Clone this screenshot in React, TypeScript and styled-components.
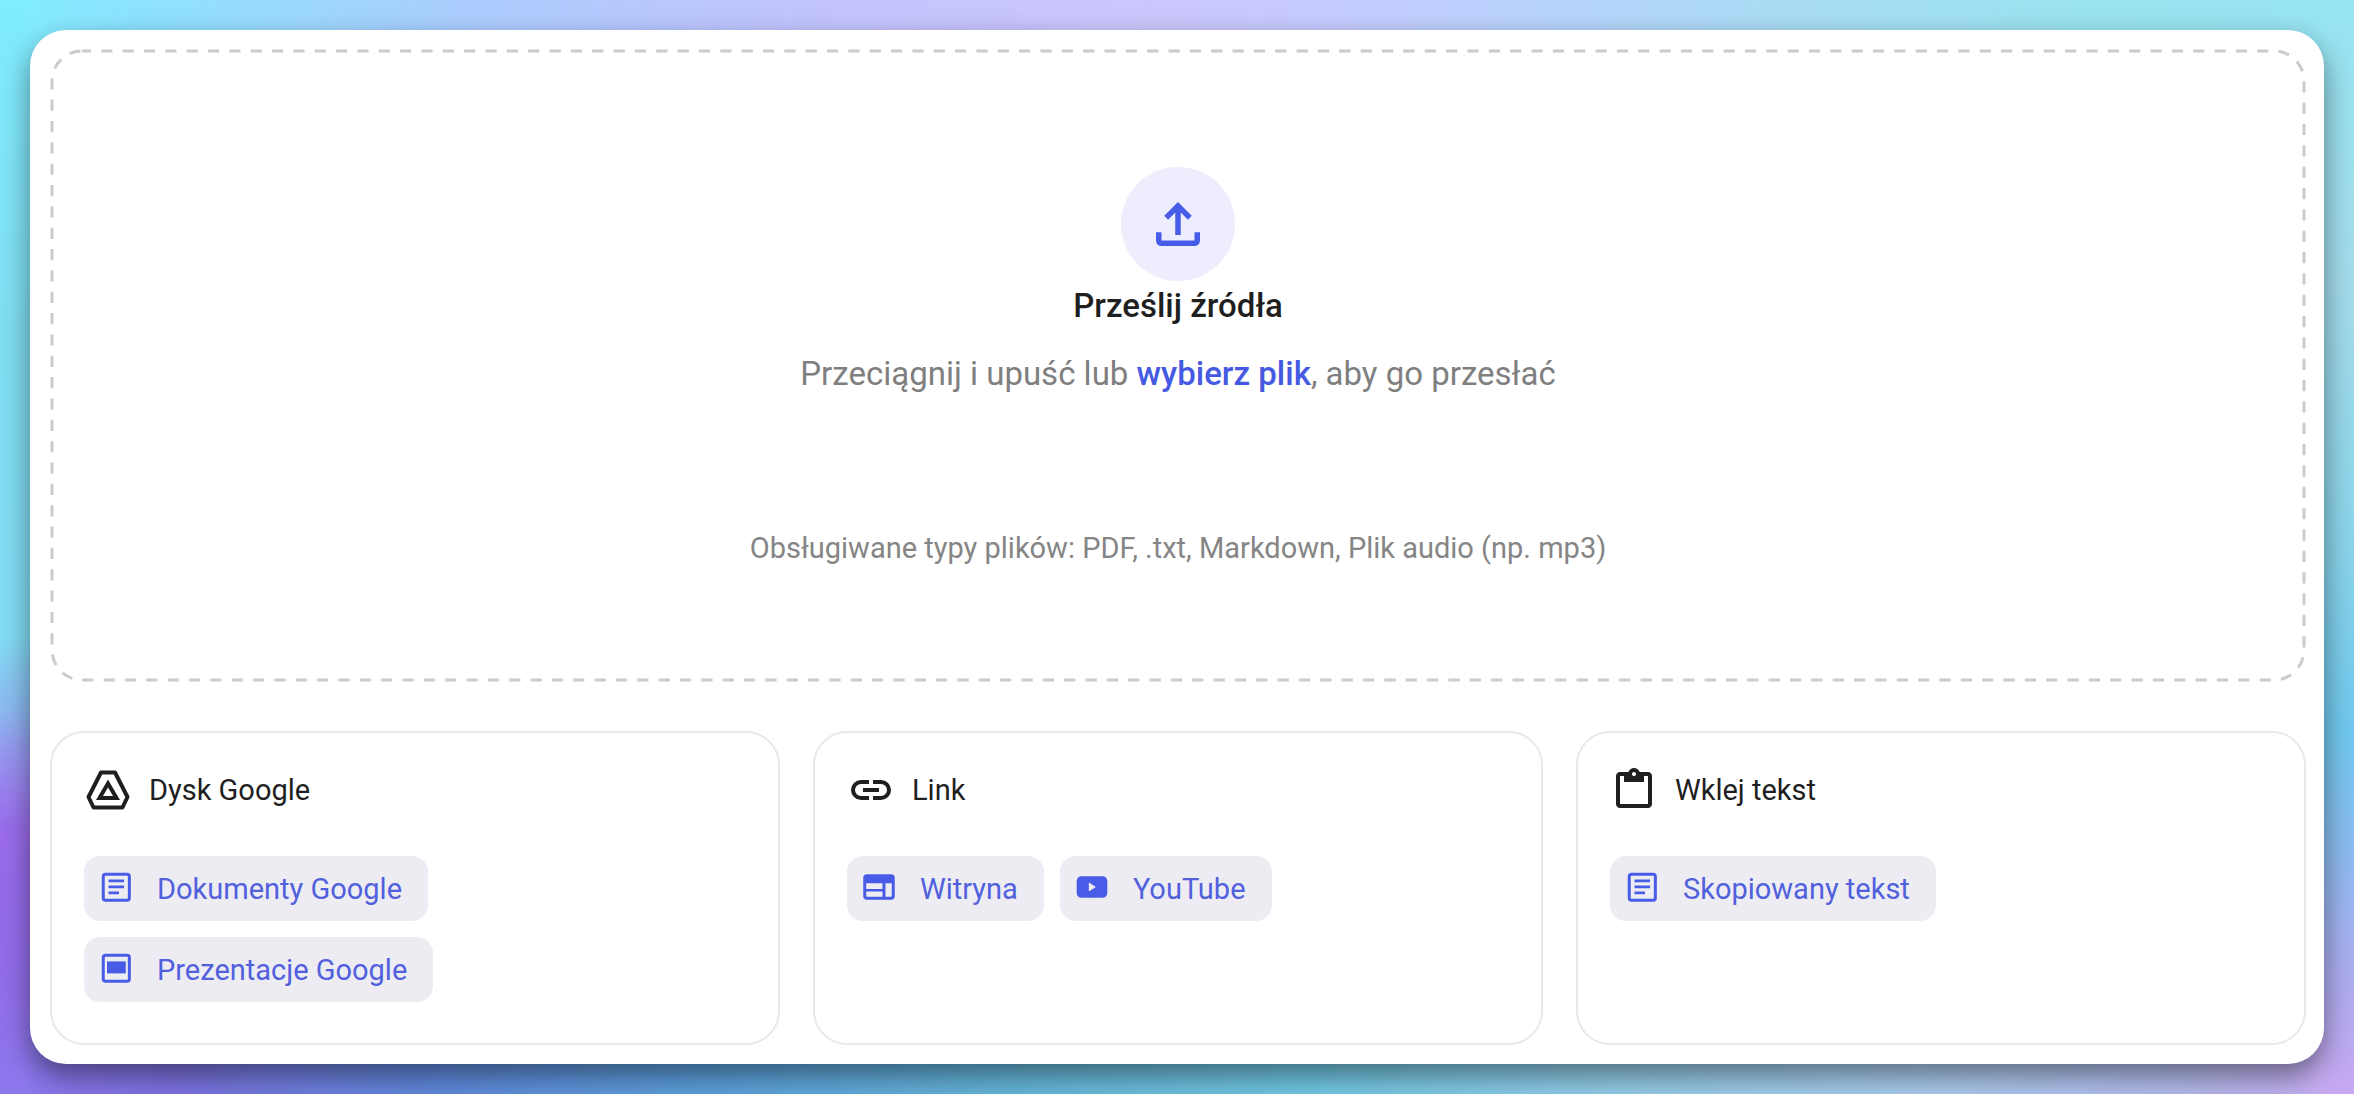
import React from "react";
import styled, { createGlobalStyle } from "styled-components";

const GlobalStyle = createGlobalStyle`
  * {
    box-sizing: border-box;
  }
  body {
    margin: 0;
    font-family: Roboto, "Liberation Sans", sans-serif;
    color: #1f1f1f;
  }
`;

const Page = styled.main`
  min-height: 100vh;
  padding: 30px;
  display: flex;
  background:
    linear-gradient(180deg, #80ecff 0%, #80dff2 30%, #82dcf4 58%, #8cb8f0 65%, #9796f0 69%, #9a6bec 76%, #926cea 88%, #8d78ee 100%) left / 30px 100% no-repeat,
    linear-gradient(180deg, #96e4f2 0%, #a4dcec 26%, #8ad4ea 50%, #70c8ee 67%, #8abcf0 77%, #aaaeee 88%, #c8a8f2 100%) right / 30px 100% no-repeat,
    linear-gradient(90deg, #80ecff 0%, #96dcff 10%, #accdff 20%, #c2c4ff 34%, #cbc6fc 48%, #c6cafe 56%, #b8d2fc 65%, #a9dcf4 76%, #9ae2f0 88%, #96e4f2 100%) top / 100% 50% no-repeat,
    linear-gradient(90deg, #8d78ee 0%, #7f72e2 7%, #6088dc 18%, #5ca0dc 30%, #66b8da 44%, #72c8e4 56%, #92cce8 68%, #aacbee 82%, #b4baec 93%, #c8a8f2 100%);
`;

const Panel = styled.section`
  flex: 1;
  display: flex;
  flex-direction: column;
  gap: 49px;
  padding: 19px 18px 19px 20px;
  border-radius: 36px;
  background: #fff;
  box-shadow: 0 12px 28px rgba(0, 0, 0, 0.45);
`;

const DropZone = styled.div`
  position: relative;
  flex: 1;
  display: flex;
  flex-direction: column;
  align-items: center;
  padding: 118px 24px 114px;
  text-align: center;
`;

const DashedOutline = styled.svg`
  position: absolute;
  inset: 0;
  width: 100%;
  height: 100%;
  pointer-events: none;

  rect {
    x: 2px;
    y: 2px;
    width: calc(100% - 4px);
    height: calc(100% - 4px);
    rx: 30px;
    fill: none;
    stroke: #cbcbcb;
    stroke-width: 3px;
  }
`;

const UploadButton = styled.button`
  display: grid;
  place-items: center;
  width: 114px;
  height: 114px;
  padding: 0;
  border: 0;
  border-radius: 50%;
  background: #ededfd;
  color: #455de8;
  cursor: pointer;
`;

const Title = styled.h1`
  margin: 5px 0 24px;
  font-size: 33px;
  font-weight: 500;
  line-height: 40px;
`;

const Description = styled.p`
  margin: 0 0 130px;
  font-size: 33px;
  line-height: 48px;
  color: #7f7f7f;
`;

const PickFile = styled.button`
  padding: 0;
  border: 0;
  background: none;
  font: inherit;
  font-weight: 500;
  color: #4659e2;
  cursor: pointer;
`;

const FileTypes = styled.p`
  margin: 0;
  font-size: 29px;
  line-height: 40px;
  color: #858585;
`;

const Cards = styled.div`
  display: grid;
  grid-template-columns: repeat(3, minmax(0, 1fr));
  gap: 33px;
`;

const Card = styled.section`
  padding: 33px 32px 41px;
  border: 2px solid #e9e9eb;
  border-radius: 34px;
`;

const CardHeading = styled.h2`
  display: flex;
  align-items: center;
  gap: 17px;
  margin: 0 0 42px;
  font-size: 29px;
  font-weight: 400;
  line-height: 40px;
`;

const Chips = styled.div`
  display: flex;
  flex-wrap: wrap;
  gap: 16px;
`;

const Chip = styled.button`
  display: flex;
  align-items: center;
  gap: 23px;
  height: 65px;
  padding: 0 26px 0 14px;
  border: 0;
  border-radius: 16px;
  background: #edecf3;
  font: inherit;
  font-size: 29px;
  line-height: 40px;
  color: #5160dc;
  cursor: pointer;

  svg {
    margin-bottom: 4px;
    color: #485ce8;
  }
`;

const Icon = styled.svg<{ $size: number }>`
  flex: none;
  width: ${(p) => p.$size}px;
  height: ${(p) => p.$size}px;
  fill: currentColor;
`;

const UploadIcon = () => (
  <Icon $size={66} viewBox="0 -960 960 960" aria-hidden="true">
    <path d="M440-320v-326L336-542l-56-58 200-200 200 200-56 58-104-104v326h-80ZM240-160q-33 0-56.5-23.5T160-240v-120h80v120h480v-120h80v120q0 33-23.5 56.5T720-160H240Z" />
  </Icon>
);

const DriveIcon = () => (
  <Icon $size={48} viewBox="0 0 48 48" aria-hidden="true">
    <g fill="none" stroke="currentColor" strokeWidth="4" strokeLinejoin="round">
      <path d="M17 6.5H31L43.5 31L38.5 41.5H9.5L4.5 31Z" />
      <path d="M24 17.5L32.5 32H15.5Z" strokeLinejoin="miter" />
    </g>
  </Icon>
);

const LinkIcon = () => (
  <Icon $size={48} viewBox="0 -960 960 960" aria-hidden="true">
    <path d="M440-280H280q-83 0-141.5-58.5T80-480q0-83 58.5-141.5T280-680h160v80H280q-50 0-85 35t-35 85q0 50 35 85t85 35h160v80ZM320-440v-80h320v80H320Zm200 160v-80h160q50 0 85-35t35-85q0-50-35-85t-85-35H520v-80h160q83 0 141.5 58.5T880-480q0 83-58.5 141.5T680-280H520Z" />
  </Icon>
);

const ClipboardIcon = () => (
  <Icon $size={48} viewBox="0 -960 960 960" aria-hidden="true">
    <path d="M200-120q-33 0-56.5-23.5T120-200v-560q0-33 23.5-56.5T200-840h167q11-35 43-57.5t70-22.5q40 0 71.5 22.5T594-840h166q33 0 56.5 23.5T840-760v560q0 33-23.5 56.5T760-120H200Zm0-80h560v-560h-80v120H280v-120h-80v560Zm280-560q17 0 28.5-11.5T520-800q0-17-11.5-28.5T480-840q-17 0-28.5 11.5T440-800q0 17 11.5 28.5T480-760Z" />
  </Icon>
);

const DocumentIcon = () => (
  <Icon $size={36} viewBox="0 0 24 24" aria-hidden="true">
    <rect x="3.5" y="3.5" width="17.4" height="17.4" rx="1.5" fill="none" stroke="currentColor" strokeWidth="2" />
    <path d="M7 7h10.400v1.800H7zM7 11h10.400v1.800H7zM7 15h7v1.800H7z" />
  </Icon>
);

const SlidesIcon = () => (
  <Icon $size={36} viewBox="0 0 24 24" aria-hidden="true">
    <rect x="3.5" y="3.5" width="17.4" height="17.4" rx="1.5" fill="none" stroke="currentColor" strokeWidth="2" />
    <path d="M6 7.600h12.500v8H6z" />
  </Icon>
);

const WebIcon = () => (
  <Icon $size={36} viewBox="0 0 24 24" aria-hidden="true">
    <rect x="2.5" y="4.5" width="19" height="15" rx="1.5" fill="none" stroke="currentColor" strokeWidth="2" />
    <path d="M2.500 5h19v4.500h-19zM14.300 9h2v10h-2zM2.500 13.300H15v1.700H2.500z" />
  </Icon>
);

const VideoIcon = () => (
  <Icon $size={36} viewBox="0 0 24 24" aria-hidden="true">
    <path
      fillRule="evenodd"
      d="M5 4.800h14a3.200 3.200 0 0 1 3.200 3.200v8a3.200 3.200 0 0 1-3.200 3.200H5A3.200 3.200 0 0 1 1.800 16V8A3.200 3.200 0 0 1 5 4.800ZM9.900 9v6l4.700-3Z"
    />
  </Icon>
);

type Source = { label: string; Glyph: () => React.JSX.Element };
type SourceGroup = Source & { items: Source[] };

const groups: SourceGroup[] = [
  {
    label: "Dysk Google",
    Glyph: DriveIcon,
    items: [
      { label: "Dokumenty Google", Glyph: DocumentIcon },
      { label: "Prezentacje Google", Glyph: SlidesIcon },
    ],
  },
  {
    label: "Link",
    Glyph: LinkIcon,
    items: [
      { label: "Witryna", Glyph: WebIcon },
      { label: "YouTube", Glyph: VideoIcon },
    ],
  },
  {
    label: "Wklej tekst",
    Glyph: ClipboardIcon,
    items: [{ label: "Skopiowany tekst", Glyph: DocumentIcon }],
  },
];

export default function App() {
  return (
    <>
      <GlobalStyle />
      <Page>
        <Panel>
          <DropZone>
            <DashedOutline aria-hidden="true">
              <rect pathLength={535} strokeDasharray="1.05 0.95" strokeDashoffset={0.2} />
            </DashedOutline>
            <UploadButton type="button" aria-label="Prześlij źródła">
              <UploadIcon />
            </UploadButton>
            <Title>Prześlij źródła</Title>
            <Description>
              Przeciągnij i upuść lub <PickFile type="button">wybierz plik</PickFile>, aby go przesłać
            </Description>
            <FileTypes>Obsługiwane typy plików: PDF, .txt, Markdown, Plik audio (np. mp3)</FileTypes>
          </DropZone>
          <Cards>
            {groups.map(({ label, Glyph, items }) => (
              <Card key={label}>
                <CardHeading>
                  <Glyph />
                  {label}
                </CardHeading>
                <Chips>
                  {items.map((item) => (
                    <Chip key={item.label} type="button">
                      <item.Glyph />
                      {item.label}
                    </Chip>
                  ))}
                </Chips>
              </Card>
            ))}
          </Cards>
        </Panel>
      </Page>
    </>
  );
}
